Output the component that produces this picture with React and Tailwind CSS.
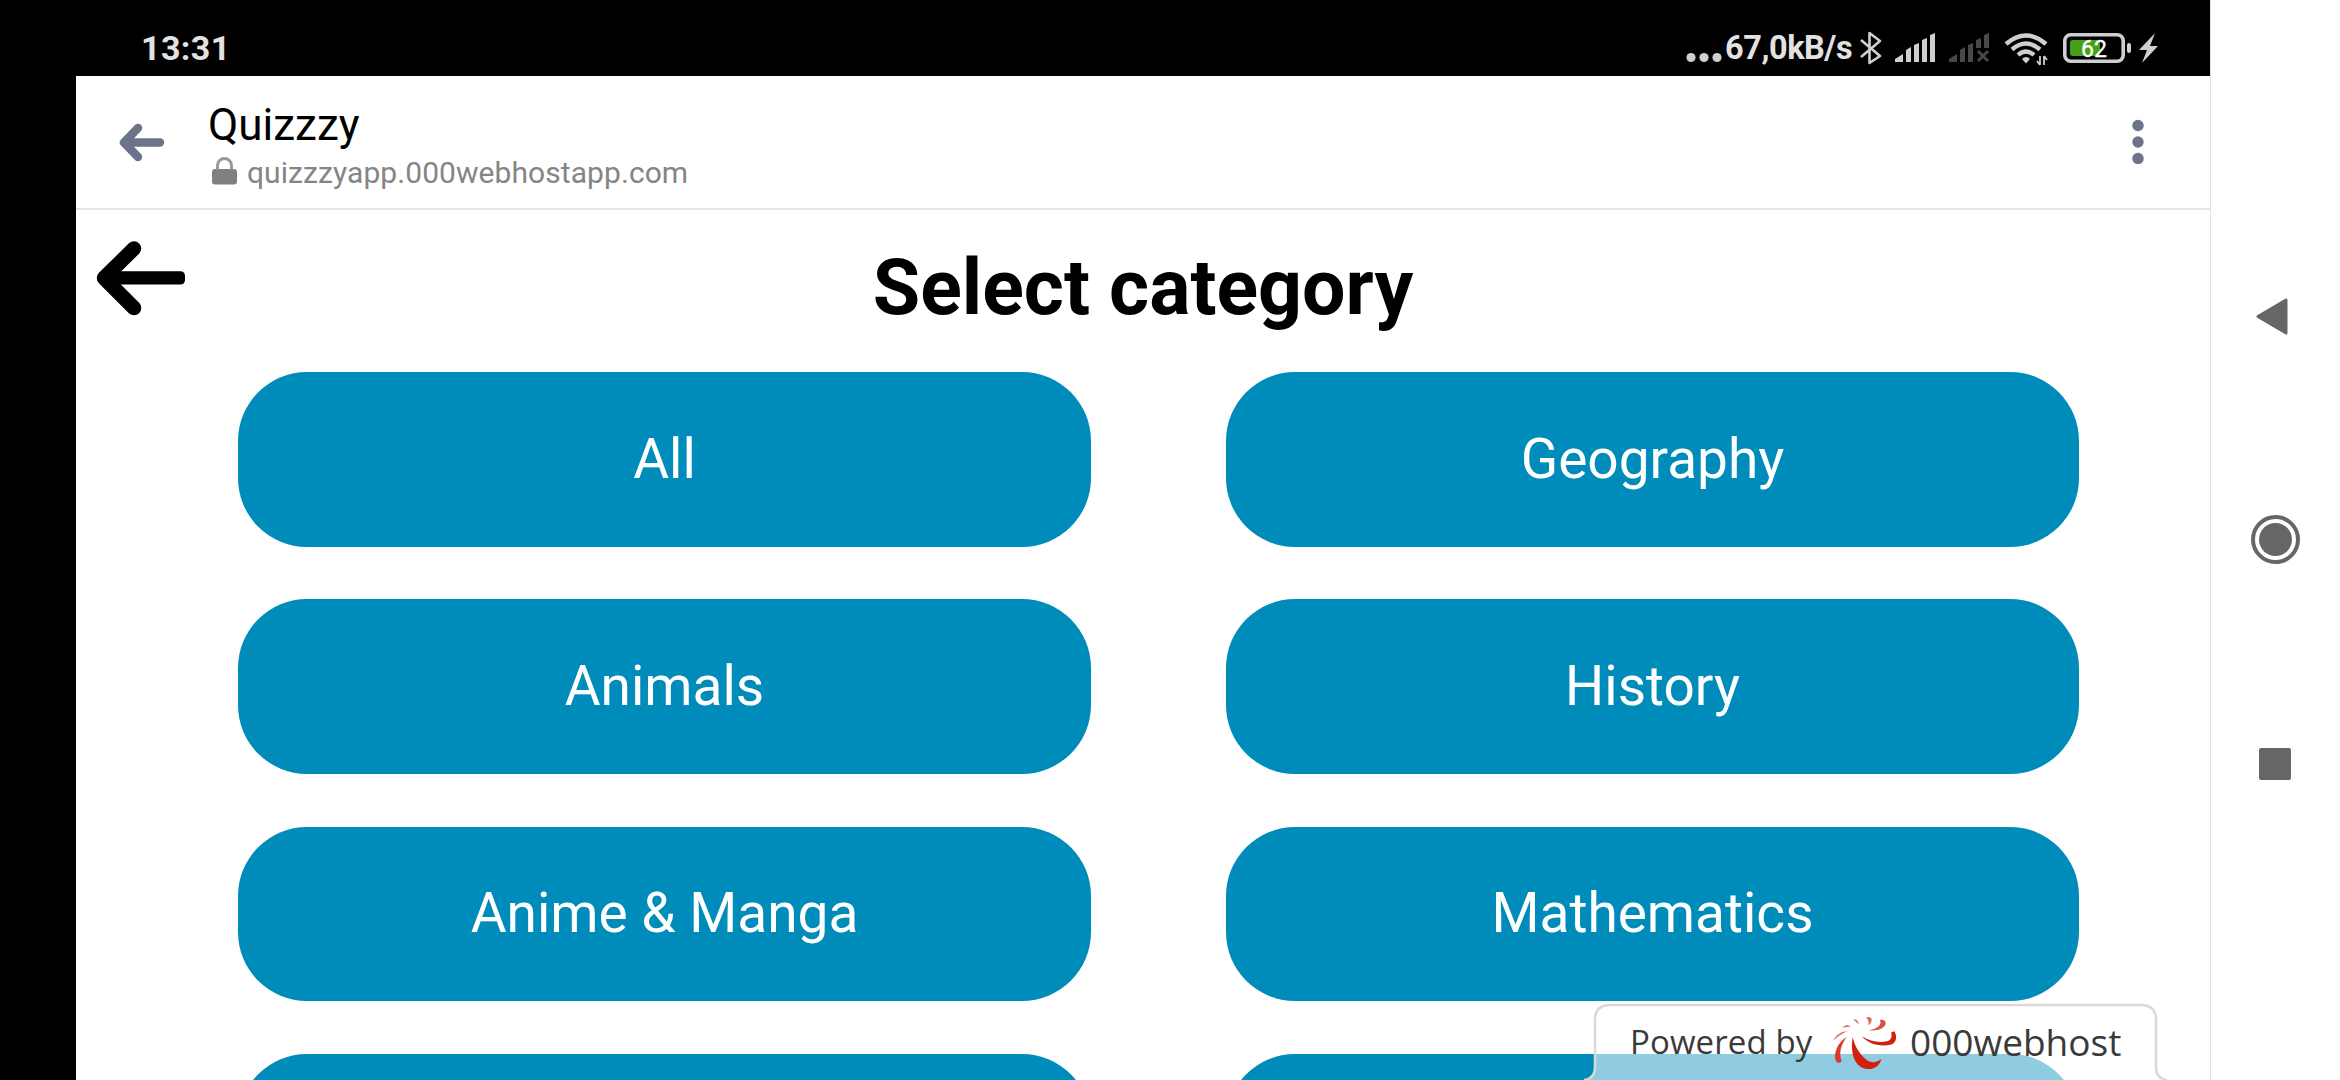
const categories = [
  ["All", "Geography"],
  ["Animals", "History"],
  ["Anime & Manga", "Mathematics"],
  ["", ""],
];

function StatusBar() {
  return (
    <div className="flex h-[76px] shrink-0 items-start justify-between bg-black pl-[141px] pr-[50px] text-[#e2e2e2]">
      <span className="mt-[28px] text-[34px] leading-[40px] font-bold tracking-[0.4px]">13:31</span>
      <div className="flex">
        <svg className="mt-[50px] h-[14px] w-[39px]" viewBox="0 0 39 14" fill="#cfcfcf">
          <circle cx="5" cy="7.5" r="4.6" /><circle cx="18" cy="7.5" r="4.6" /><circle cx="31" cy="7.5" r="4.6" />
        </svg>
        <span className="mt-[28px] w-[130px] text-[32.500px] leading-[40px] font-bold tracking-[-0.45px] whitespace-nowrap">67,0kB/s</span>
        <svg className="h-[76px] w-[305px]" viewBox="1855 0 305 76" fill="#cfcfcf">
          <path d="M1861 40l19 16-10.500 7V33l10.500 8-19 16" fill="none" stroke="#cfcfcf" strokeWidth="2.6" strokeLinejoin="round" />
          <path d="M1895 62v-3l8-5v8zM1906 62V50l5-3v15zM1914 62V45l5-2v19zM1922 62V40l5-2v24zM1930 62V35l5-2v29z" />
          <path fill="#484848" d="M1949 62v-3l8-5v8zM1960 62V50l5-3v15zM1968 62V45l5-2v19zM1976 48V40l5-2v10zM1984 48V35l5-2v15z" />
          <path d="M1978 51l10 10M1988 51l-10 10" stroke="#484848" strokeWidth="3" />
          <g fill="none" stroke="#cfcfcf" strokeWidth="4.300">
            <path d="M2006 44q20-17 40 0M2012 49.500q14-12 28 0M2018 55q8-7 16 0" />
          </g>
          <path d="M2022 59q4-4 8 0l-4 4.500z" />
          <path d="M2040 56v9M2044 56v9M2037 61l3 4M2047 60l-3-4" stroke="#cfcfcf" strokeWidth="1.800" />
          <rect x="2064.800" y="34.800" width="58.400" height="26.400" rx="6" fill="none" stroke="#cfcfcf" strokeWidth="3.600" />
          <rect x="2070" y="40" width="30" height="16" rx="3" fill="#46a015" />
          <rect x="2127" y="43" width="4" height="10" rx="2" />
          <text x="2081" y="56.500" fill="#fff" fontSize="23" fontWeight="400" stroke="#fff" strokeWidth="0.300">62</text>
          <path d="M2155 33l-16 17h8l-5 13 16-17h-8z" />
        </svg>
      </div>
    </div>
  );
}

function BrowserBar() {
  return (
    <header className="flex h-[134px] shrink-0 border-b-2 border-[#e4e4e4]">
      <svg className="mt-[46px] ml-[42px] h-[40px] w-[48px]" viewBox="0 0 48 40" fill="none" stroke="#6b7488" strokeWidth="8.400" strokeLinecap="round" strokeLinejoin="round">
        <path d="M20 6L6 20.500L20 35M6 20.500H42" />
      </svg>
      <div className="ml-[42px] grow">
        <h2 className="mt-[23px] text-[44px] leading-[52px] text-black">Quizzzy</h2>
        <div className="mt-[4px] flex">
          <svg className="mt-[2px] ml-[4px] h-[28px] w-[25px]" viewBox="0 0 25 28">
            <rect y="12" width="25" height="15.500" rx="3" fill="#808080" />
            <path d="M5.500 13V8.500a7 7 0 0 1 14 0V13" fill="none" stroke="#999" strokeWidth="3" />
          </svg>
          <span className="ml-[10px] text-[30px] leading-[36px] tracking-[0.070px] text-[#858585]">quizzzyapp.000webhostapp.com</span>
        </div>
      </div>
      <svg className="mt-[42px] mr-[66px] h-[46px] w-[12px]" viewBox="0 0 12 46" fill="#6b7488">
        <circle cx="6" cy="7.500" r="5.700" /><circle cx="6" cy="24" r="5.700" /><circle cx="6" cy="40.500" r="5.700" />
      </svg>
    </header>
  );
}

function HostBadge() {
  return (
    <div className="absolute right-[43px] bottom-0 flex h-[77px] w-[583px] font-['Open_Sans',sans-serif] text-[#3a3a3a]">
      <svg className="absolute inset-0 h-[77px] w-[583px]" viewBox="0 0 583 77">
        <path d="M0 77Q11 76 11 64V17Q11 2 26 2H557Q572 2 572 17V64Q572 76 583 77" fill="#fff" fillOpacity="0.56" stroke="#d9d9d5" strokeWidth="2.500" />
      </svg>
      <span className="relative mt-[16px] ml-[46px] w-[202px] text-[33px] leading-[46px] tracking-[0.1px] whitespace-nowrap">Powered by</span>
      <svg className="relative mt-[11px] h-[56px] w-[66px]" viewBox="24 42 198 168" fill="#d2200c">
        <path d="M86 112C78 160 92 206 132 207C154 207 166 196 173 176C158 188 142 190 128 180C110 166 94 144 86 112Z" />
        <path d="M114 109C134 134 172 142 204 133C218 126 220 108 211 94L202 97C205 113 200 122 188 124C162 129 136 123 114 109Z" />
        <path d="M68 111C44 124 26 160 36 184C42 191 50 189 53 183C43 160 52 132 68 111Z" fill="#d63a2b" />
        <path d="M134 91C158 94 184 86 185 70C185 62 178 57 168 60C174 76 160 86 134 91Z" fill="#d95244" />
        <path d="M126 53C134 49 144 52 143 61C142 68 138 72 132 76C136 66 134 58 126 53Z" fill="#dc675b" />
        <path d="M71 94C54 94 36 104 28 122C40 110 54 100 71 94ZM80 80C70 72 60 76 55 84C64 80 72 80 80 80ZM104 74C104 62 96 56 87 59C94 63 100 68 104 74Z" fill="#dc675b" />
      </svg>
      <span className="relative mt-[14px] ml-[12px] text-[37px] leading-[50px] whitespace-nowrap">000webhost</span>
    </div>
  );
}

export default function App() {
  return (
    <div className="flex h-[1080px] w-[2340px] overflow-hidden bg-white font-[Roboto,sans-serif]">
      <div className="flex w-[2210px] flex-col">
        <StatusBar />
        <div className="flex min-h-0 grow">
          <div className="w-[76px] bg-black" />
          <div className="relative flex w-[2134px] flex-col overflow-hidden">
            <BrowserBar />
            <div className="flex h-[162px] shrink-0 justify-center">
              <svg className="mt-[30px] ml-[20px] h-[76px] w-[90px]" viewBox="0 0 90 76">
                <path d="M38 8.500L8 38L38 68" fill="none" stroke="#000" strokeWidth="14.500" strokeLinecap="round" strokeLinejoin="round" />
                <rect x="8" y="31.300" width="81" height="13.200" rx="4.500" />
              </svg>
              <h1 className="mt-[33px] mr-[110px] grow text-center text-[77px] leading-[90px] font-bold text-black">Select category</h1>
            </div>
            <main className="mx-[162px] grid w-[1841px] grid-cols-2 gap-x-[135px] gap-y-[52.500px]">
              {categories.flat().map((name, index) => (
                <button key={index} className="h-[174.750px] rounded-[69px] bg-[#008cba] pb-[1px] text-[55px] text-white">{name}</button>
              ))}
            </main>
            <HostBadge />
          </div>
        </div>
      </div>
      <nav className="flex w-[130px] flex-col items-center border-l border-[#e2e2e2]">
        <svg className="mt-[297px] mr-[2px] h-[40px] w-[60px]" viewBox="0 0 60 40" fill="#666" stroke="#666" strokeWidth="3" strokeLinejoin="round">
          <path d="M13 19.500L41 3V36Z" />
        </svg>
        <div className="mt-[178px] flex size-[49px] items-center justify-center rounded-full border-4 border-[#666]">
          <div className="size-[33px] rounded-full bg-[#666]" />
        </div>
        <div className="mt-[184px] mr-[1px] size-[32px] rounded-[2px] bg-[#666]" />
      </nav>
    </div>
  );
}
